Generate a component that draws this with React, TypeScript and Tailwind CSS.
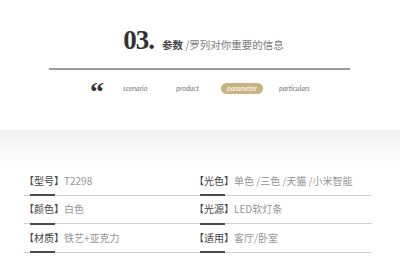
const cjk = { fontFamily: '"Noto Sans CJK SC", "Noto Sans", sans-serif' };

const rows = [
  [
    { label: "【型号】", value: "T2298" },
    { label: "【光色】", value: "单色 /三色 /天猫 /小米智能" },
  ],
  [
    { label: "【颜色】", value: "白色" },
    { label: "【光源】", value: "LED软灯条" },
  ],
  [
    { label: "【材质】", value: "铁艺+亚克力" },
    { label: "【适用】", value: "客厅/卧室" },
  ],
];

const Cell = ({ label, value }: { label: string; value: string }) => (
  <div className="flex flex-col">
    <div className="flex h-[26.5px] items-center text-[10px] leading-none" style={cjk}>
      <span className="text-[#444]">{label}</span>
      <span className="text-[#959595]">{value}</span>
    </div>
    <div className="flex h-[2px] items-center">
      <div className="h-px w-[6px] bg-[#cfcfcf]" />
      <div className="h-[2px] w-[25px] bg-[#4a4a4a]" />
      <div className="h-px flex-1 bg-[#cfcfcf]" />
    </div>
  </div>
);

export default function App() {
  return (
    <div className="h-[264px] w-[400px] overflow-hidden bg-white">
      {/* title */}
      <div className="flex h-[68px] items-baseline justify-center pt-[27px] pl-[7px]">
        <span
          className="text-[27px] font-bold leading-none tracking-[-1px] text-[#333]"
          style={{ fontFamily: '"Liberation Serif", serif' }}
        >
          03.
        </span>
        <span className="ml-[8px] text-[10.5px] leading-none" style={cjk}>
          <span className="font-bold text-[#444]">参数</span>
          <span className="text-[#7a7a7a]"> /罗列对你重要的信息</span>
        </span>
      </div>
      <div className="ml-[49px] h-[1.5px] w-[301px] bg-[#9a9a9a]" />

      {/* nav */}
      <div
        className="flex h-[38px] items-center justify-center text-[7px] italic leading-none text-[#777]"
        style={{ fontFamily: 'Lato, "Open Sans", sans-serif' }}
      >
        <span
          className="mt-[-7px] h-[14px] text-[28px] font-bold not-italic leading-none text-[#333]"
          style={{ fontFamily: '"Liberation Serif", serif' }}
        >
          “
        </span>
        <span className="ml-[19px]">scenario</span>
        <span className="ml-[29px]">product</span>
        <span className="ml-[22px] rounded-full bg-[#c9b37f] px-[6px] py-[2px] text-white">parameter</span>
        <span className="ml-[16px]">particulars</span>
      </div>
      <div className="h-[22px]" />

      {/* gradient band */}
      <div className="h-[38px] bg-gradient-to-b from-[#f1f1f1] to-white" />

      {/* params */}
      <div className="ml-[24px] grid w-[348px] grid-cols-[170px_178px]">
        {rows.map((r, i) => (
          <div key={i} className="contents">
            <Cell {...r[0]} />
            <Cell {...r[1]} />
          </div>
        ))}
      </div>
    </div>
  );
}
